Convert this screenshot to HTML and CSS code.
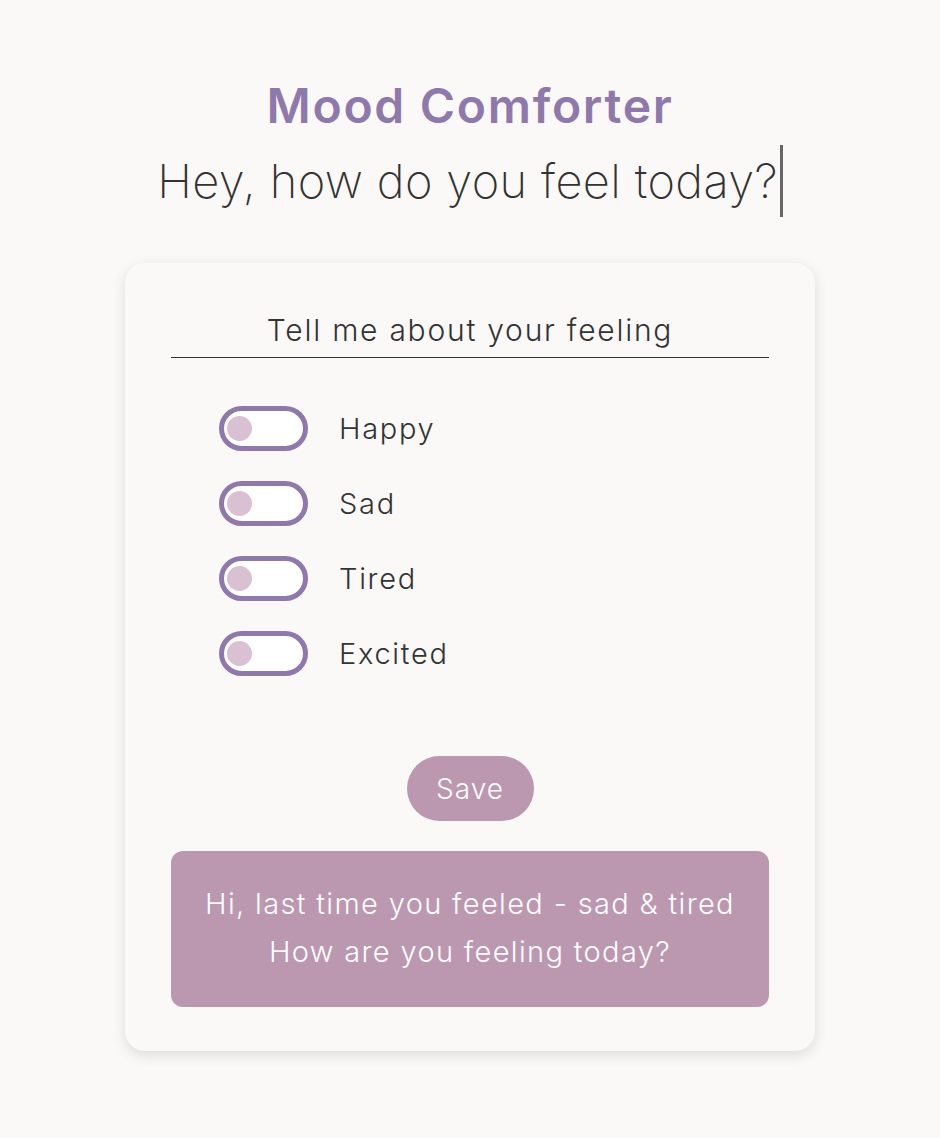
FILE: index.html
```html
<!DOCTYPE html>
<html lang="en">
<head>
<meta charset="utf-8">
<title>Mood Comforter</title>
<link rel="stylesheet" href="styles.css">
</head>
<body>
<header class="header">
  <h1 class="title">Mood Comforter</h1>
  <p class="subtitle"><span class="typed">Hey, how do you feel today?</span></p>
</header>
<main class="card">
  <div class="field">
    <input class="feeling-input" type="text" placeholder="Tell me about your feeling">
  </div>
  <ul class="moods">
    <li class="mood"><span class="toggle"><span class="knob"></span></span><span class="mood-label">Happy</span></li>
    <li class="mood"><span class="toggle"><span class="knob"></span></span><span class="mood-label">Sad</span></li>
    <li class="mood"><span class="toggle"><span class="knob"></span></span><span class="mood-label">Tired</span></li>
    <li class="mood"><span class="toggle"><span class="knob"></span></span><span class="mood-label">Excited</span></li>
  </ul>
  <div class="actions"><button class="save" type="button">Save</button></div>
  <div class="message">
    <p>Hi, last time you feeled - sad &amp; tired</p>
    <p>How are you feeling today?</p>
  </div>
</main>
</body>
</html>
```

FILE: styles.css
```css
* { box-sizing: border-box; }
html, body { margin: 0; padding: 0; }
body {
  background: #faf9f7;
  font-family: "Inter", "Open Sans", sans-serif;
  color: #333;
  min-height: 1138px;
}
.header {
  text-align: center;
  padding-top: 78px;
}
.title {
  margin: 0;
  font-size: 48px;
  line-height: 56px;
  font-weight: 600;
  letter-spacing: 1.7px;
  color: #8f79ac;
}
.subtitle {
  margin: 0;
  padding-top: 11px;
  font-size: 47px;
  font-weight: 200;
  line-height: 72px;
  letter-spacing: 0.35px;
  color: #333;
}
.typed {
  display: inline-block;
  border-right: 3px solid #666;
  line-height: 72px;
  padding-right: 2px;
}
.card {
  width: 690px;
  margin: 46px auto 0;
  background: #faf9f7;
  border-radius: 20px;
  box-shadow: 0 4px 14px rgba(0,0,0,0.12);
  padding: 46px 46px 44px;
  display: flex;
  flex-direction: column;
}
.field { display: flex; }
.feeling-input {
  width: 100%;
  border: none;
  border-bottom: 1px solid #333;
  background: transparent;
  font-family: inherit;
  font-size: 30px;
  font-weight: 300;
  letter-spacing: 1.75px;
  text-align: center;
  padding: 0 0 6px;
  height: 49px;
  outline: none;
  color: #333;
}
.feeling-input::placeholder { color: #333; opacity: 1; }
.moods {
  list-style: none;
  margin: 48px 0 0;
  padding: 0 0 0 48px;
  display: flex;
  flex-direction: column;
  gap: 30px;
}
.mood {
  display: flex;
  align-items: center;
  gap: 31px;
}
.toggle {
  width: 89px;
  height: 45px;
  border: 5px solid #8f79ac;
  border-radius: 23px;
  background: #fff;
  display: flex;
  align-items: center;
  padding-left: 3px;
}
.knob {
  width: 25px;
  height: 25px;
  border-radius: 50%;
  background: #d9c0d3;
}
.mood-label {
  font-size: 29px;
  font-weight: 300;
  letter-spacing: 1.7px;
  color: #333;
}
.actions {
  display: flex;
  justify-content: center;
  margin-top: 80px;
}
.save {
  width: 127px;
  height: 65px;
  border: none;
  border-radius: 33px;
  background: #bc97b0;
  color: #fff;
  font-family: inherit;
  font-size: 28px;
  font-weight: 300;
  letter-spacing: 1px;
}
.message {
  margin-top: 30px;
  background: #bc97b0;
  border-radius: 12px;
  padding: 29px 10px 31px;
  text-align: center;
  color: #fff;
  font-size: 29px;
  font-weight: 300;
  letter-spacing: 1.35px;
  line-height: 48px;
}
.message p { margin: 0; }
```
